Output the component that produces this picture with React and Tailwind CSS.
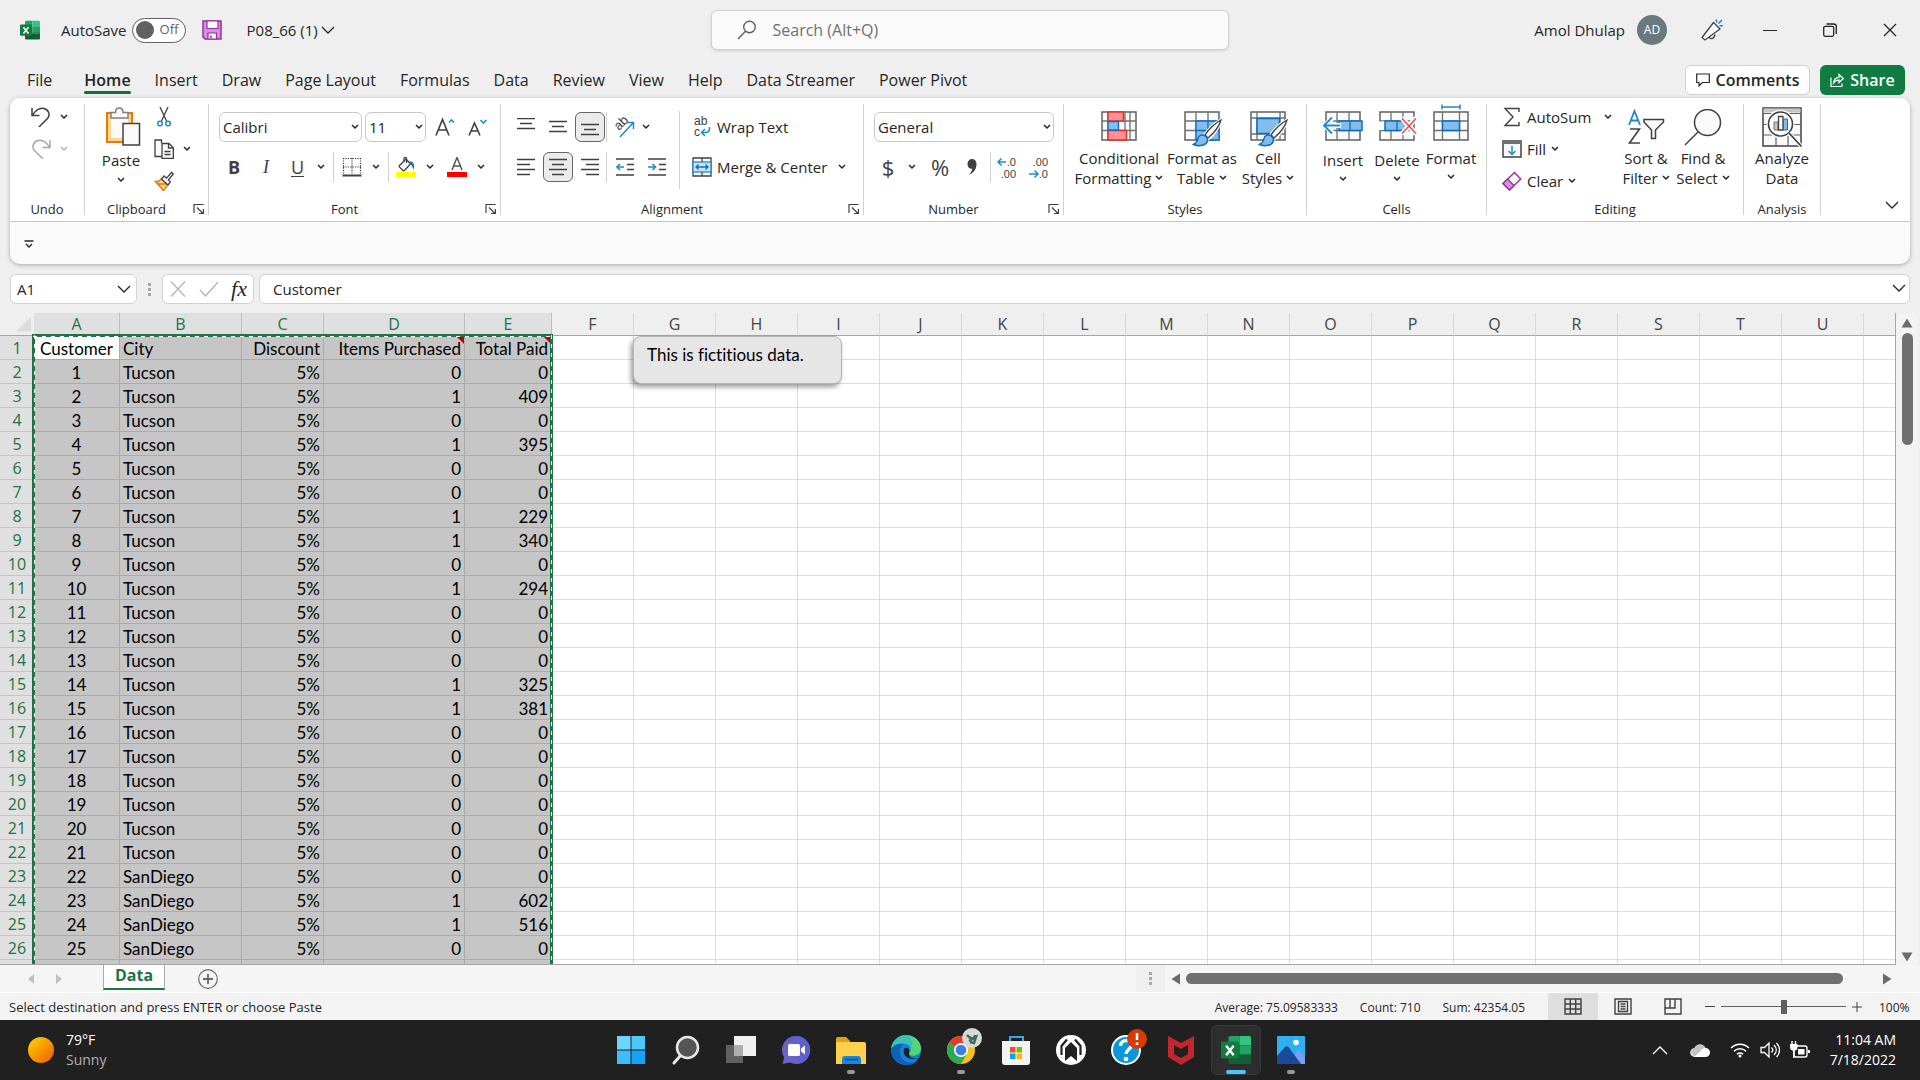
import React from "react";

/* ---------- small building blocks ---------- */

const Chev = ({ className = "text-[#262626]" }) => (
  <svg viewBox="0 0 8 6" className={`h-[6px] w-2 shrink-0 ${className}`} fill="none" stroke="currentColor" strokeWidth="1.5">
    <path d="M1 1l3 3 3-3" />
  </svg>
);

const BigChev = ({ className = "" }) => (
  <svg viewBox="0 0 14 8" className={`h-2 w-[14px] shrink-0 ${className}`} fill="none" stroke="#262626" strokeWidth="1.3">
    <path d="M1 1l6 6 6-6" />
  </svg>
);

const Launcher = () => (
  <button aria-label="More options" className="absolute right-[3px] bottom-0 h-3 w-3">
    <svg viewBox="0 0 12 12" className="h-3 w-3" fill="none" stroke="#404040" strokeWidth="1.2">
      <path d="M1 10V1.5h9.5M4 4.500l6 6M10.400 6v4.500H6" />
    </svg>
  </button>
);

const Group = ({ label, width, launcher, children }) => (
  <section aria-label={label} className={`relative flex h-[111px] shrink-0 flex-col border-r border-[#d1d1d1] ${width}`}>
    <div className="min-h-0 flex-1">{children}</div>
    <div className={`h-3 text-center text-[13px] leading-3 text-[#262626] ${launcher ? "pr-5" : ""}`}>{label}</div>
    {launcher && <Launcher />}
  </section>
);

const IconBtn = ({ label, active, className = "w-8", children }) => (
  <button
    aria-label={label}
    className={`flex h-[30px] shrink-0 items-center justify-center rounded-md ${active ? "border border-[#666] bg-[#ebebeb]" : ""} ${className}`}
  >
    {children}
  </button>
);

const Sep = ({ className = "h-[30px]" }) => <div className={`w-px shrink-0 bg-[#d1d1d1] ${className}`} />;

const TallBtn = ({ icon, lines, width, chevBelow, noChev, iconHeight = "h-[43px]" }) => (
  <button className={`flex shrink-0 flex-col items-center text-[15px] leading-5 whitespace-nowrap text-[#262626] ${width}`}>
    <span className={`flex w-10 items-start justify-center ${iconHeight}`}>{icon}</span>
    <span>{lines[0]}</span>
    {chevBelow ? (
      <span className="flex h-[18px] items-center">
        <Chev />
      </span>
    ) : (
      <span className="flex items-center gap-1">
        {lines[1]}
        {!noChev && <Chev />}
      </span>
    )}
  </button>
);

/* ---------- icons ---------- */

const ExcelIcon = ({ className }) => (
  <svg viewBox="0 0 32 32" className={className}>
    <path d="M10 1h10v10H8V3a2 2 0 0 1 2-2z" fill="#21a366" />
    <path d="M20 1h10a2 2 0 0 1 2 2v8H20z" fill="#33c481" />
    <path d="M8 11h12v10H8z" fill="#107c41" />
    <path d="M20 11h12v10H20z" fill="#21a366" />
    <path d="M8 21h24v8a2 2 0 0 1-2 2H10a2 2 0 0 1-2-2z" fill="#185c37" />
    <path d="M20 21h12v-1H20z" fill="#107c41" />
    <rect x="0" y="7" width="19" height="18" rx="1.500" fill="#107c41" />
    <path d="M5.500 11.500l8 10M13.500 11.500l-8 10" stroke="#fff" strokeWidth="2.600" />
  </svg>
);

const SaveIcon = () => (
  <svg viewBox="0 0 20 20" className="h-5 w-5">
    <path d="M1 1h18v18H3l-2-2z" fill="#d590dc" stroke="#9a2fa3" strokeWidth="1.500" />
    <path d="M5 1h11v7.500H5z" fill="#fafafa" stroke="#9a2fa3" strokeWidth="1.200" />
    <path d="M6 19v-6h8.500v6z" fill="#fafafa" stroke="#9a2fa3" strokeWidth="1.200" />
    <path d="M9 15.500v3" stroke="#9a2fa3" strokeWidth="1.500" />
  </svg>
);

const UndoIcon = ({ flip, color = "#404040" }) => (
  <svg viewBox="0 0 20 20" className={`h-5 w-5 ${flip ? "-scale-x-100" : ""}`} fill="none" stroke={color} strokeWidth="1.500">
    <path d="M1 1v7.500h7.500M1.500 8C5 3 9 .5 13 1.500c5 1.500 6.500 6.500 3.500 10L8 20" />
  </svg>
);

const PasteIcon = () => (
  <svg viewBox="0 0 36 40" className="h-10 w-9">
    <rect x="2" y="6" width="25" height="29" fill="#fff" stroke="#e8790c" strokeWidth="2" />
    <rect x="4.500" y="8.500" width="20" height="24" fill="#fafafa" stroke="#fbd68c" strokeWidth="3" />
    <path d="M6 11V5.500h4.500C10.500-.5 18 -.5 18 5.500h5V11z" fill="#fafafa" stroke="#808080" strokeWidth="1.500" />
    <rect x="18" y="16.500" width="16.500" height="21.500" fill="#fafafa" stroke="#404040" strokeWidth="1.500" />
  </svg>
);

const CutIcon = () => (
  <svg viewBox="0 0 16 20" className="h-5 w-4" fill="none" strokeWidth="1.300">
    <path d="M4 0l6.500 14M12 0L5.500 14" stroke="#404040" />
    <circle cx="4" cy="16.500" r="2.300" stroke="#1e8bcd" strokeWidth="1.500" />
    <circle cx="12" cy="16.500" r="2.300" stroke="#1e8bcd" strokeWidth="1.500" />
  </svg>
);

const CopyIcon = () => (
  <svg viewBox="0 0 20 20" className="h-5 w-5" fill="#fafafa" stroke="#404040" strokeWidth="1.300">
    <path d="M8 17.500H1V1h6.500v3" />
    <path d="M8 4.500h7l4.300 4.300V19.300H8z" />
    <path d="M14.500 4.500v4.500h4.500M10.500 12.500h6M10.500 15.500h6" fill="none" />
  </svg>
);

const PainterIcon = () => (
  <svg viewBox="0 0 20 20" className="h-5 w-5">
    <path d="M1.500 10.500c2.500.2 4.500-.6 6-2.500l6 5.500c-1 2.500-2 4.500-4 6L1.500 10.500z" fill="#fbd68c" stroke="#e8790c" strokeWidth="1.500" />
    <path d="M4 13l8 0" stroke="#e8790c" strokeWidth="1.300" />
    <path d="M7.500 8l2.500-3 2.500 2.200L17.500 1.500l1.800 1.500-5 6 2 2-2.300 3z" fill="#fff" stroke="#404040" strokeWidth="1.300" />
  </svg>
);

const FontGrow = ({ down }) => (
  <svg viewBox="0 0 20 20" className="h-5 w-5" fill="none">
    <path d={down ? "M1 18.500L6.500 6l5.500 12.500M3.200 14h6.600" : "M1 18.500L7.500 2.500l6.500 16M3.500 13h8"} stroke="#404040" strokeWidth="1.600" />
    <path d={down ? "M12.500 3l3 3 3-3" : "M14 5.500l2.500-2.500L19 5.500"} stroke="#1e8bcd" strokeWidth="1.600" />
  </svg>
);

const BordersIcon = () => (
  <svg viewBox="0 0 20 20" className="h-5 w-5" fill="none" stroke="#404040">
    <path d="M1 1.500h18M1 10h18M1.500 1v16M10 1v16M18.500 1v16" strokeDasharray="1.200 1.200" strokeWidth="1.200" />
    <path d="M.5 18.500h19" strokeWidth="1.800" />
  </svg>
);

const FillIcon = () => (
  <svg viewBox="0 0 20 20" className="h-5 w-5">
    <path d="M10 2L3.500 8.500c-.6.6-.6 1 0 1.600l3.300 3.200c.6.6 1.200.6 1.800 0L14.500 7z" fill="#fafafa" stroke="#404040" strokeWidth="1.300" />
    <path d="M8 5V1.500c0-1.500 2.500-1.500 2.500 0V6" fill="none" stroke="#404040" strokeWidth="1.200" />
    <path d="M13 5c3-1.500 6 1 5 7.500-1.200-1-1.500-3-3-5z" fill="#1e6fb8" />
    <rect y="15" width="20" height="5" fill="#ff0" />
  </svg>
);

const FontColorIcon = () => (
  <svg viewBox="0 0 20 20" className="h-5 w-5">
    <path d="M5 13l5-12.500L15 13M6.800 9h6.400" fill="none" stroke="#555" strokeWidth="1.500" />
    <rect y="15" width="20" height="5" fill="#f00" />
  </svg>
);

const Lines = ({ d }) => (
  <svg viewBox="0 0 18 18" className="h-[18px] w-[18px]" fill="none" stroke="#404040" strokeWidth="1.300">
    <path d={d} />
  </svg>
);

const OrientIcon = () => (
  <svg viewBox="0 0 22 22" className="h-[22px] w-[22px] overflow-visible font-['Liberation_Sans']">
    <text x="0" y="0" transform="translate(6 15) rotate(-45)" fontSize="13" fill="#404040">ab</text>
    <path d="M7 21L20 7M14 6.500h6.500V13" fill="none" stroke="#1e8bcd" strokeWidth="1.500" />
  </svg>
);

const IndentIcon = ({ inc }) => (
  <svg viewBox="0 0 18 18" className="h-[18px] w-[18px]" fill="none" strokeWidth="1.300">
    <path d="M0 1h18M11 6.500h7M11 11.500h7M0 17h18" stroke="#404040" />
    <path d={inc ? "M0 9h7M4.500 6l3 3-3 3" : "M8 9H1M4 6L1 9l3 3"} stroke="#1e8bcd" strokeWidth="1.600" />
  </svg>
);

const WrapIcon = () => (
  <svg viewBox="0 0 18 26" className="h-[26px] w-[18px] overflow-visible font-['Liberation_Sans']">
    <text x="1" y="11" fontSize="12" fill="#404040">ab</text>
    <text x="1" y="22" fontSize="12" fill="#404040">c</text>
    <path d="M16.500 13v1.500c0 2.500-1.500 4-4 4H8.500M12 15l-3.500 3.500L12 22" fill="none" stroke="#1e8bcd" strokeWidth="1.500" />
  </svg>
);

const MergeIcon = () => (
  <svg viewBox="0 0 20 20" className="h-5 w-5" fill="none" strokeWidth="1.300">
    <path d="M1 1h18v18H1zM10 1v4M10 15v4" stroke="#404040" />
    <rect x="1" y="5" width="18" height="10" fill="#c9e4f7" stroke="#1e8bcd" />
    <path d="M4 10h12M6.500 7.500L4 10l2.500 2.500M13.500 7.500L16 10l-2.500 2.500" stroke="#0f6cbd" />
  </svg>
);

const DecimalIcon = ({ dec }) => (
  <svg viewBox="0 0 20 25" className="h-[25px] w-5 overflow-visible font-['Liberation_Sans']">
    <text x="19" y="11" fontSize="11" fill="#404040" textAnchor="end">{dec ? ".00" : ".0"}</text>
    <text x="19" y="23" fontSize="11" fill="#404040" textAnchor="end">{dec ? ".0" : ".00"}</text>
    <path d={dec ? "M0 19h9M5.500 15.500L9 19l-3.500 3.500" : "M9 7H1M4.500 3.500L1 7l3.500 3.500"} fill="none" stroke="#1e8bcd" strokeWidth="1.500" />
  </svg>
);

const GridBase = ({ children }) => (
  <svg viewBox="0 0 36 30" className="mt-[6px] h-[30px] w-9 overflow-visible" fill="none" strokeWidth="1.300">
    <path d="M1 1h34v28H1z" fill="#fafafa" stroke="#606060" strokeWidth="1.500" />
    <path d="M1 10h34M1 19.500h34M12 1v28M24 1v28" stroke="#707070" />
    {children}
  </svg>
);

const BrushOverlay = () => (
  <>
    <path d="M37 9c-6 3-13 10-17 16l4 3c6-5 11-12 13-19z" fill="#fafafa" stroke="#fff" strokeWidth="3" />
    <path d="M37 9c-6 3-13 10-16 15l3 3c6-5 11-11 13-18z" fill="#fafafa" stroke="#404040" />
    <path d="M20.500 24.500c-3-1.500-6 0-6.500 3-.5 3-2 4.500-4.500 6 6 2.500 13 1 14-4 .3-2-1-4-3-5z" fill="#83bdeb" stroke="#0f6cbd" strokeWidth="1.500" />
  </>
);

const CondIcon = () => (
  <svg viewBox="0 0 36 30" className="mt-[6px] h-[30px] w-9 overflow-visible" fill="none" strokeWidth="1.300">
    <path d="M1 1h34v28H1z" fill="#fafafa" stroke="#606060" strokeWidth="1.500" />
    <path d="M1 10h34M1 19.500h34M7 1v28M29 1v28M24 1v28" stroke="#707070" />
    <path d="M7 1h15.500v9H7zM7 19.500h18.500v9.500H7z" fill="#ff9092" stroke="#e0302c" strokeWidth="1.500" />
    <path d="M7 10.500h10.500v8.500H7z" fill="#83bdeb" stroke="#0f6cbd" />
  </svg>
);

const FormatTableIcon = () => (
  <GridBase>
    <path d="M12 10h23v19H12z" fill="#83bdeb" stroke="#0f6cbd" />
    <path d="M12 19.500h23M24 10v19" stroke="#0f6cbd" />
    <BrushOverlay />
  </GridBase>
);

const CellStylesIcon = () => (
  <svg viewBox="0 0 36 30" className="mt-[6px] h-[30px] w-9 overflow-visible" fill="none" strokeWidth="1.300">
    <path d="M1 1h34v28H1z" fill="#fafafa" stroke="#606060" strokeWidth="1.500" />
    <path d="M1 7h34M1 23h34M7 1v28M30 1v28" stroke="#707070" />
    <path d="M7 7.500h22.500V22.500H7z" fill="#83bdeb" stroke="#0f6cbd" strokeWidth="1.500" />
    <BrushOverlay />
  </svg>
);

const InsertIcon = () => (
  <GridBase>
    <path d="M14 10h23v9.500H14z" fill="#83bdeb" stroke="#0f6cbd" strokeWidth="1.500" />
    <path d="M25 10v9.500" stroke="#0f6cbd" />
    <path d="M9 5.500L0 14.500l9 9M0 14.500h16" stroke="#fff" strokeWidth="5" />
    <path d="M7 6.500l-8 8 8 8M-1 14.500h16" stroke="#1e8bcd" strokeWidth="1.800" />
  </GridBase>
);

const DeleteIcon = () => (
  <GridBase>
    <path d="M0 10.500h6v8.500H0z" fill="#fff" />
    <path d="M6 10h18l5 4.800-5 4.700H6z" fill="#83bdeb" stroke="#0f6cbd" strokeWidth="1.500" />
    <path d="M18 10v9.500" stroke="#0f6cbd" />
    <path d="M23 7l14 16M37 7L23 23" stroke="#fff" strokeWidth="5" />
    <path d="M23 7.500l14 15M37 7.500l-14 15" stroke="#f04a4a" strokeWidth="1.600" />
  </GridBase>
);

const FormatIcon = () => (
  <svg viewBox="0 0 36 30" className="mt-[6px] h-[30px] w-9 overflow-visible" fill="none" strokeWidth="1.300">
    <path d="M1 1h34v28H1z" fill="#fafafa" stroke="#606060" strokeWidth="1.500" />
    <path d="M1 10h34M1 19.500h34M9.500 1v28M26.500 1v28" stroke="#707070" />
    <path d="M9.500 10h17v9.500h-17z" fill="#83bdeb" stroke="#0f6cbd" strokeWidth="1.500" />
    <path d="M9-4h18M9-6.500v5M27-6.500v5" stroke="#1e8bcd" strokeWidth="1.500" />
  </svg>
);

const SigmaIcon = () => (
  <svg viewBox="0 0 18 20" className="h-5 w-[18px]" fill="none" stroke="#404040" strokeWidth="1.400">
    <path d="M16 5V1.500H2L10 10l-8 8.500h14V15" />
  </svg>
);

const FillDownIcon = () => (
  <svg viewBox="0 0 20 18" className="h-[18px] w-5" fill="none" strokeWidth="1.500">
    <path d="M1 1h18v16H1z" fill="#fafafa" stroke="#404040" />
    <path d="M1 2.500h18" stroke="#707070" strokeWidth="3" />
    <path d="M10 6v8M6.500 11l3.500 3.500 3.500-3.500" stroke="#1e8bcd" />
  </svg>
);

const EraserIcon = () => (
  <svg viewBox="0 0 20 20" className="h-5 w-5" stroke="#9a2fa3" strokeWidth="1.400">
    <path d="M12.500 1.500L18.800 8 7.500 19 1 12.500z" fill="#fafafa" />
    <path d="M5.500 8L12 14.500 7.500 19 1 12.500z" fill="#d590dc" />
  </svg>
);

const SortIcon = () => (
  <svg viewBox="0 0 38 36" className="mt-1 h-9 w-[38px]" fill="none">
    <path d="M2 16L7.500 2 13 16M4 11.500h7" stroke="#1e8bcd" strokeWidth="1.800" />
    <path d="M3 20h9.500L2.500 34H13" stroke="#404040" strokeWidth="1.600" />
    <path d="M17 10.500h19.500v2.500L28.500 21v8.500h-4V21L17 13z" fill="#fafafa" stroke="#404040" strokeWidth="1.500" />
  </svg>
);

const FindIcon = () => (
  <svg viewBox="0 0 38 38" className="mt-1 h-[38px] w-[38px]" fill="none" stroke="#404040" strokeWidth="1.500">
    <circle cx="23.500" cy="13.500" r="13" fill="#fafafa" />
    <path d="M14 23L1 36" />
  </svg>
);

const AnalyzeIcon = () => (
  <svg viewBox="0 0 40 40" className="mt-[2px] h-10 w-10" fill="none">
    <path d="M1 1h38v38H1z" fill="#fafafa" stroke="#404040" strokeWidth="1.500" />
    <path d="M1.500 3.500h37" stroke="#c8c6c4" strokeWidth="4" />
    <path d="M1 6.500h38M1 17.500h38M1 28h38M14 28v11M26 28v11" stroke="#606060" strokeWidth="1.200" />
    <circle cx="18.500" cy="17" r="14" fill="#fff" />
    <circle cx="18.500" cy="17" r="12" fill="#fff" stroke="#404040" strokeWidth="1.600" />
    <path d="M12 15h4v8h-4z" fill="#c8c6c4" stroke="#707070" />
    <path d="M16.500 9.500h4.500V23h-4.500z" fill="#fafafa" stroke="#404040" strokeWidth="1.300" />
    <path d="M21.500 12h4v11h-4z" fill="#83bdeb" stroke="#0f6cbd" />
    <path d="M27 26l12 13" stroke="#fff" strokeWidth="4" />
    <path d="M27 26l12 13" stroke="#404040" strokeWidth="1.800" />
  </svg>
);

/* ---------- title bar and tabs ---------- */

const TitleBar = () => (
  <header className="flex h-[60px] shrink-0 items-center text-[15px] text-[#262626]">
    <div className="flex flex-1 items-center pl-5">
      <ExcelIcon className="h-5 w-5" />
      <label htmlFor="autosave" className="ml-[21px]">AutoSave</label>
      <button id="autosave" role="switch" aria-checked="false" className="ml-[5px] flex h-[25px] w-[54px] items-center gap-[6px] rounded-full border border-[#616161] bg-white pl-[3px] text-[13px] text-[#616161]">
        <span className="h-[18px] w-[18px] rounded-full bg-[#616161]" />
        Off
      </button>
      <button aria-label="Save" className="ml-4"><SaveIcon /></button>
      <button className="ml-[25px] flex items-center gap-[3px]">P08_66 (1) <BigChev /></button>
    </div>
    <div className="ml-[22px] flex h-10 w-[518px] shrink-0 items-center rounded-md border border-[#d1d1d1] bg-[#fafafa] pl-[25px] shadow-sm">
      <svg viewBox="0 0 20 20" className="h-5 w-5" fill="none" stroke="#616161" strokeWidth="1.400">
        <circle cx="12.500" cy="7" r="5.800" />
        <path d="M8.500 11.200L1 19" />
      </svg>
      <input aria-label="Search" placeholder="Search (Alt+Q)" className="ml-4 min-w-0 flex-1 bg-transparent text-base outline-none placeholder:text-[#707070]" />
    </div>
    <div className="flex flex-1 items-center justify-end pr-[23px]">
      <span>Amol Dhulap</span>
      <span className="ml-3 flex h-[30px] w-[30px] items-center justify-center rounded-full bg-[#69797e] text-xs text-white">AD</span>
      <button aria-label="What's new" className="ml-[34px]">
        <svg viewBox="0 0 22 22" className="h-[22px] w-[22px]" fill="none" strokeWidth="1.300">
          <path d="M12.500 3.500l6.500 6.500L4 21l-3-2.500z" fill="#fafafa" stroke="#404040" />
          <path d="M8 18c1 2.500 5 2.500 6-2.500" stroke="#404040" />
          <path d="M15 .5l1 3M21 1l-3.500 3.500M18.500 6.500l3.500.5" stroke="#1e8bcd" strokeWidth="1.600" />
        </svg>
      </button>
      <button aria-label="Minimize" className="ml-10 flex h-4 w-[14px] items-center">
        <span className="block h-px w-full bg-[#262626]" />
      </button>
      <button aria-label="Restore" className="ml-[46px]">
        <svg viewBox="0 0 14 14" className="h-[14px] w-[14px]" fill="none" stroke="#262626" strokeWidth="1.300">
          <rect x=".7" y="3.300" width="10" height="10" rx="1.500" />
          <path d="M3.500 1h7c2 0 2.800 1 2.800 2.500V11" />
        </svg>
      </button>
      <button aria-label="Close" className="ml-[46px]">
        <svg viewBox="0 0 14 14" className="h-[14px] w-[14px]" fill="none" stroke="#262626" strokeWidth="1.300">
          <path d="M1 1l12 12M13 1L1 13" />
        </svg>
      </button>
    </div>
  </header>
);

const tabs = ["Insert", "Draw", "Page Layout", "Formulas", "Data", "Review", "View", "Help", "Data Streamer", "Power Pivot"];

const Tabs = () => (
  <nav className="flex h-[38px] shrink-0 items-center pt-px pr-[15px] pl-[27px] text-base text-[#262626]">
    <div className="flex items-center gap-6 pt-px">
      <button className="mr-2">File</button>
      <button className="relative font-semibold">
        Home
        <span className="absolute -bottom-[2px] left-0 h-[3px] w-full rounded-full bg-[#0e703a]" />
      </button>
      {tabs.map((t) => (
        <button key={t}>{t}</button>
      ))}
    </div>
    <div className="ml-auto flex gap-[10px] font-semibold">
      <button className="flex h-[30px] w-[125px] items-center justify-center gap-[6px] rounded-md border border-[#d1d1d1] bg-white">
        <svg viewBox="0 0 14 14" className="h-[14px] w-[14px]" fill="none" stroke="#262626" strokeWidth="1.200">
          <path d="M.7 1h12.600v8.500H6.500L3 12.800V9.500H.7z" />
        </svg>
        Comments
      </button>
      <button className="flex h-[30px] w-[85px] items-center justify-center gap-[6px] rounded-md bg-[#107c41] text-white">
        <svg viewBox="0 0 14 14" className="h-[14px] w-[14px]" fill="none" stroke="#fff" strokeWidth="1.200">
          <path d="M1 4.500v9h11v-3M3.500 10c.5-4 2.500-5.500 5.500-5.700V1.500l4.300 4L9 9.500V6.800C6.500 7 5 8 3.500 10z" />
        </svg>
        Share
      </button>
    </div>
  </nav>
);

/* ---------- ribbon ---------- */

const ribbonSelect = "h-[30px] appearance-none rounded-md border border-[#c8c8c8] bg-white pl-[3px] text-[15px] leading-5 text-[#262626]";

const Combo = ({ label, value, width }) => (
  <div className={`relative ${width}`}>
    <select aria-label={label} className={`w-full ${ribbonSelect}`}>
      <option>{value}</option>
    </select>
    <Chev className="pointer-events-none absolute top-3 right-[3px] text-[#262626]" />
  </div>
);

const Ribbon = () => (
  <div className="mx-[10px] shrink-0 overflow-hidden rounded-[10px] bg-[#fafafa] shadow-[0_1px_4px_rgba(0,0,0,0.3)]">
    <div className="flex h-[124px] border-b border-[#c6c6c6] bg-white pt-[6px]">
      <Group label="Undo" width="w-[75px]">
        <div className="flex flex-col gap-3 pt-[3px] pl-[21px]">
          <div className="flex items-center gap-[9px]">
            <button aria-label="Undo"><UndoIcon /></button>
            <button aria-label="Undo history"><Chev /></button>
          </div>
          <div className="flex items-center gap-[9px]">
            <button aria-label="Redo"><UndoIcon flip color="#a8a8a8" /></button>
            <button aria-label="Redo history"><Chev className="text-[#b0b0b0]" /></button>
          </div>
        </div>
      </Group>

      <Group label="Clipboard" width="w-[124px]" launcher>
        <div className="flex pl-[15px]">
          <button className="flex w-[42px] flex-col items-center pt-[3px] text-[15px] leading-5 text-[#262626]">
            <span className="flex w-10 justify-end"><PasteIcon /></span>
            <span className="mt-[3px]">Paste</span>
            <span className="flex h-5 items-center"><Chev /></span>
          </button>
          <div className="flex flex-col gap-3 pt-[3px] pl-3">
            <button aria-label="Cut" className="flex w-5 justify-center"><CutIcon /></button>
            <div className="flex items-center gap-[9px]">
              <button aria-label="Copy"><CopyIcon /></button>
              <button aria-label="Copy options"><Chev /></button>
            </div>
            <button aria-label="Format Painter" className="w-5"><PainterIcon /></button>
          </div>
        </div>
      </Group>

      <Group label="Font" width="w-[292px]" launcher>
        <div className="flex items-center gap-[3px] pt-2 pl-[10px]">
          <Combo label="Font" value="Calibri" width="w-[143px]" />
          <Combo label="Font size" value="11" width="w-[61px]" />
          <IconBtn label="Increase Font Size" className="ml-[2px] w-7"><FontGrow /></IconBtn>
          <IconBtn label="Decrease Font Size" className="w-8"><FontGrow down /></IconBtn>
        </div>
        <div className="mt-[10px] flex items-center pl-[9px] text-lg text-[#404040]">
          <IconBtn label="Bold"><b>B</b></IconBtn>
          <IconBtn label="Italic"><i className="font-['Liberation_Serif']">I</i></IconBtn>
          <IconBtn label="Underline" className="w-[31px]"><u className="underline-offset-2">U</u></IconBtn>
          <IconBtn label="Underline options" className="w-4"><Chev /></IconBtn>
          <Sep className="ml-1 h-[30px]" />
          <IconBtn label="Borders" className="ml-[2px] w-8"><BordersIcon /></IconBtn>
          <IconBtn label="Border options" className="w-4"><Chev /></IconBtn>
          <Sep className="ml-1 h-[30px]" />
          <IconBtn label="Fill Color" className="ml-px w-8"><FillIcon /></IconBtn>
          <IconBtn label="Fill options" className="w-4"><Chev /></IconBtn>
          <IconBtn label="Font Color" className="ml-[3px] w-8"><FontColorIcon /></IconBtn>
          <IconBtn label="Font color options" className="w-4"><Chev /></IconBtn>
        </div>
      </Group>

      <Group label="Alignment" width="w-[363px]" launcher>
        <div className="flex pl-[9px]">
          <div className="pt-2">
            <div className="flex items-center">
              <IconBtn label="Top Align"><Lines d="M0 0.500h18M3 5.500h12M0 10.500h18" /></IconBtn>
              <IconBtn label="Middle Align"><Lines d="M0 3.500h18M3 8.500h12M0 13.500h18" /></IconBtn>
              <IconBtn label="Bottom Align" active className="mx-px w-[30px]"><Lines d="M0 6.500h18M3 11.500h12M0 16.500h18" /></IconBtn>
              <Sep />
              <IconBtn label="Orientation" className="ml-px w-8"><OrientIcon /></IconBtn>
              <IconBtn label="Orientation options" className="w-3"><Chev /></IconBtn>
            </div>
            <div className="mt-[10px] flex items-center">
              <IconBtn label="Align Left"><Lines d="M0 1.500h18M0 6.500h13M0 11.500h18M0 16.500h13" /></IconBtn>
              <IconBtn label="Center" active className="mx-px w-[30px]"><Lines d="M0 1.500h18M3 6.500h12M0 11.500h18M3 16.500h12" /></IconBtn>
              <IconBtn label="Align Right"><Lines d="M0 1.500h18M5 6.500h13M0 11.500h18M5 16.500h13" /></IconBtn>
              <Sep />
              <IconBtn label="Decrease Indent" className="ml-[2px] w-8"><IndentIcon /></IconBtn>
              <IconBtn label="Increase Indent"><IndentIcon inc /></IconBtn>
            </div>
          </div>
          <Sep className="mt-[7px] ml-[6px] h-[78px]" />
          <div className="pt-2 pl-3 text-[15px] whitespace-nowrap text-[#262626]">
            <button className="flex h-[30px] items-center gap-[5px]"><span className="flex w-5 justify-center"><WrapIcon /></span>Wrap Text</button>
            <div className="mt-[10px] flex items-center gap-[11px]">
              <button className="flex h-[30px] items-center gap-[5px]"><MergeIcon />Merge &amp; Center</button>
              <button aria-label="Merge options"><Chev /></button>
            </div>
          </div>
        </div>
      </Group>

      <Group label="Number" width="w-[200px]" launcher>
        <div className="pt-2 pl-[10px]">
          <Combo label="Number format" value="General" width="w-[180px]" />
          <div className="mt-[10px] flex items-center text-[22px] text-[#404040]">
            <IconBtn label="Accounting Format" className="w-7">$</IconBtn>
            <IconBtn label="Accounting options" className="w-5"><Chev /></IconBtn>
            <IconBtn label="Percent Style" className="w-9">%</IconBtn>
            <IconBtn label="Comma Style" className="w-7">
              <svg viewBox="0 0 12 18" className="h-[18px] w-3">
                <path d="M6 1c3 0 4.500 2 4.500 5.500C10.500 11.500 7 15.500 2.500 17c2.500-2 3.500-4 3.700-6.300C3.500 11 1.500 9 1.500 6S3.500 1 6 1z" fill="#404040" />
              </svg>
            </IconBtn>
            <Sep className="ml-1 h-[30px]" />
            <IconBtn label="Increase Decimal"><DecimalIcon /></IconBtn>
            <IconBtn label="Decrease Decimal"><DecimalIcon dec /></IconBtn>
          </div>
        </div>
      </Group>

      <Group label="Styles" width="w-[243px]">
        <div className="flex pt-[1px] pl-2">
          <TallBtn width="w-[94px]" icon={<CondIcon />} lines={["Conditional", "Formatting"]} />
          <TallBtn width="w-[72px]" icon={<FormatTableIcon />} lines={["Format as", "Table"]} />
          <TallBtn width="w-[60px]" icon={<CellStylesIcon />} lines={["Cell", "Styles"]} />
        </div>
      </Group>

      <Group label="Cells" width="w-[180px]">
        <div className="flex pt-[1px] pl-[9px]">
          <TallBtn width="w-[54px]" icon={<InsertIcon />} lines={["Insert"]} chevBelow iconHeight="h-[45px]" />
          <TallBtn width="w-[54px]" icon={<DeleteIcon />} lines={["Delete"]} chevBelow iconHeight="h-[45px]" />
          <TallBtn width="w-[54px]" icon={<FormatIcon />} lines={["Format"]} chevBelow />
        </div>
      </Group>

      <Group label="Editing" width="w-[257px]">
        <div className="flex pt-px pl-[15px]">
          <div className="flex w-[116px] flex-col gap-2 text-[15px] whitespace-nowrap text-[#262626]">
            <div className="flex h-6 items-center justify-between pr-[6px]">
              <button className="flex items-center gap-[5px]"><span className="flex w-5 justify-center"><SigmaIcon /></span>AutoSum</button>
              <button aria-label="AutoSum options"><Chev /></button>
            </div>
            <button className="flex h-6 items-center gap-[5px]"><FillDownIcon />Fill <Chev /></button>
            <button className="flex h-6 items-center gap-[5px]"><EraserIcon />Clear <Chev /></button>
          </div>
          <TallBtn width="w-[56px]" icon={<SortIcon />} lines={["Sort &", "Filter"]} />
          <TallBtn width="w-[58px]" icon={<FindIcon />} lines={["Find &", "Select"]} />
        </div>
      </Group>

      <Group label="Analysis" width="w-[77px]">
        <div className="flex justify-center pt-[1px]">
          <TallBtn width="w-[60px]" icon={<AnalyzeIcon />} lines={["Analyze", "Data"]} noChev />
        </div>
      </Group>

      <button aria-label="Collapse ribbon" className="mt-auto mr-[11px] mb-3 ml-auto"><BigChev /></button>
    </div>
    <div className="flex h-[42px] items-center pt-[2px] pl-[14px]">
      <button aria-label="Customize toolbar">
        <svg viewBox="0 0 10 9" className="h-[9px] w-[10px]" fill="none" stroke="#262626" strokeWidth="1.400">
          <path d="M.5 1h9M2 4l3 3 3-3" />
        </svg>
      </button>
    </div>
  </div>
);

/* ---------- formula bar ---------- */

const Dots = ({ className = "" }) => (
  <span className={`flex flex-col gap-[2px] ${className}`}>
    <span className="h-[3px] w-[3px] bg-[#a8a8a8]" />
    <span className="h-[3px] w-[3px] bg-[#a8a8a8]" />
    <span className="h-[3px] w-[3px] bg-[#a8a8a8]" />
  </span>
);

const FormulaBar = () => (
  <div className="mt-[10px] flex h-[30px] shrink-0 items-center px-[10px] text-[15px] text-[#262626]">
    <div className="relative h-full w-[127px]">
      <input aria-label="Name box" defaultValue="A1" className="h-full w-full rounded-md border border-[#d1d1d1] bg-white pl-[6px] outline-none" />
      <button aria-label="Name list" className="absolute top-[11px] right-[6px]"><BigChev className="block" /></button>
    </div>
    <Dots className="mx-[11px]" />
    <div className="flex h-full w-[92px] items-center justify-between rounded-md border border-[#d1d1d1] bg-white px-[6px]">
      <button aria-label="Cancel">
        <svg viewBox="0 0 18 18" className="h-[18px] w-[18px]" fill="none" stroke="#b5b5b5" strokeWidth="1.300"><path d="M2 1.500l14 15M16 1.500L2 16.500" /></svg>
      </button>
      <button aria-label="Enter">
        <svg viewBox="0 0 20 16" className="h-4 w-5" fill="none" stroke="#b5b5b5" strokeWidth="1.300"><path d="M1 9l5.500 6L19 1" /></svg>
      </button>
      <button aria-label="Insert Function" className="font-['Liberation_Serif'] text-[22px] leading-5 font-medium text-[#262626] italic">fx</button>
    </div>
    <div className="relative ml-[5px] h-full flex-1">
      <input aria-label="Formula bar" defaultValue="Customer" className="h-full w-full rounded-md border border-[#d1d1d1] bg-white pl-[13px] outline-none" />
      <button aria-label="Expand formula bar" className="absolute top-[10px] right-1"><BigChev className="block" /></button>
    </div>
  </div>
);

/* ---------- sheet ---------- */

const paid = { 2: 409, 4: 395, 7: 229, 8: 340, 10: 294, 14: 325, 15: 381, 23: 602, 24: 516 };
const rows = [["Customer", "City", "Discount", "Items Purchased", "Total Paid"]];
for (let i = 1; i <= 25; i++) {
  rows.push([i, i < 22 ? "Tucson" : "SanDiego", "5%", paid[i] ? 1 : 0, paid[i] || 0]);
}
rows.push(["", "", "", "", ""]);
const letters = "ABCDEFGHIJKLMNOPQRSTU".split("");
const aligns = ["text-center", "text-left pl-[3px]", "text-right pr-[3px]", "text-right pr-[3px]", "text-right pr-[3px]"];

const Sheet = () => (
  <div className="flex min-h-0 flex-1 pt-[9px]">
    <div className="relative min-w-0 flex-1 overflow-hidden border-r border-b border-[#a6a6a6] bg-white">
      <table className="w-full table-fixed border-separate border-spacing-0 font-['Lato'] text-[17px] leading-[21px] text-black">
        <colgroup>
          <col className="w-[34px]" />
          <col className="w-[86px]" />
          <col className="w-[122px]" />
          <col className="w-[82px]" />
          <col className="w-[141px]" />
          <col className="w-[87px]" />
          {letters.slice(5).map((l) => (
            <col key={l} className="w-[82px]" />
          ))}
          <col />
        </colgroup>
        <thead>
          <tr className="h-[23px] bg-[#efefef] font-['Open_Sans'] text-base">
            <th aria-label="Select all" className="border-b border-[#a6a6a6] p-0">
              <span className="ml-4 block h-[15px] w-[15px] bg-[#dcdcdc] [clip-path:polygon(100%_0,100%_100%,0_100%)]" />
            </th>
            {letters.map((l, i) => (
              <th
                key={l}
                className={`border-r border-b border-b-[#a6a6a6] p-0 leading-[22px] font-normal ${i < 5 ? "border-r-[#bdbdbd] bg-[#e0e0e0] text-[#217346]" : "border-r-[#d8d8d8] text-[#444]"}`}
              >
                {l}
              </th>
            ))}
            <th className="border-b border-[#a6a6a6] p-0" />
          </tr>
        </thead>
        <tbody>
          {rows.map((r, ri) => (
            <tr key={ri} className="h-6">
              <th className="border-b border-[#c6c6c6] bg-[#e0e0e0] p-0 text-center font-['Open_Sans'] text-base leading-5 font-normal text-[#217346]">
                {ri < 26 ? ri + 1 : ""}
              </th>
              {r.map((v, ci) => (
                <td
                  key={ci}
                  className={`relative border-r border-b border-[#ababab] p-0 pt-px whitespace-nowrap ${aligns[ci]} ${ri === 0 && ci === 0 ? "bg-white" : "bg-[#c6c6c6]"}`}
                >
                  {v}
                  {ri === 0 && ci > 2 && (
                    <span className="absolute top-px right-0 h-[7px] w-[7px] bg-[#c00000] [clip-path:polygon(0_0,100%_0,100%_100%)]" />
                  )}
                </td>
              ))}
              {letters.slice(5).map((l) => (
                <td key={l} className="border-r border-b border-[#dedede] p-0" />
              ))}
              <td className="border-b border-[#dedede] p-0" />
            </tr>
          ))}
        </tbody>
      </table>

      <div className="pointer-events-none absolute top-[21px] -bottom-1 left-8 w-[521px] border-[3px] border-[#217346]">
        <div className="absolute -top-px -right-[2px] -left-[2px] h-px bg-[repeating-linear-gradient(90deg,#fff_0_4px,transparent_4px_9px)]" />
        <div className="absolute -top-[2px] bottom-0 -left-px w-px bg-[repeating-linear-gradient(180deg,#fff_0_4px,transparent_4px_9px)]" />
        <div className="absolute -top-[2px] -right-[2px] bottom-0 w-px bg-[repeating-linear-gradient(180deg,#fff_0_4px,transparent_4px_9px)]" />
      </div>

      <div className="absolute top-[23px] left-[633px] h-[48px] w-[209px] rounded-lg border border-[#b5b5b5] bg-[#e6e6e6] pt-2 pl-[13px] font-['Lato'] text-[17px] leading-5 text-black shadow-[-2px_3px_5px_rgba(0,0,0,0.4)] [font-variant-ligatures:none]">
        This is fictitious data.
      </div>
    </div>

    <div className="mr-[2px] flex w-[22px] shrink-0 flex-col items-center rounded-t-lg bg-[#f3f3f3] py-[3px]">
      <svg viewBox="0 0 12 10" className="mt-[2px] h-[10px] w-3"><path d="M6 .5L11.500 9.500H.5z" fill="#6b6b6b" /></svg>
      <div className="mt-[5px] h-28 w-[11px] rounded-full bg-[#707070]" />
      <svg viewBox="0 0 12 10" className="mt-auto h-[10px] w-3"><path d="M6 9.500L11.500.5H.5z" fill="#6b6b6b" /></svg>
    </div>
  </div>
);

const SheetTabs = () => (
  <div className="flex h-[28px] shrink-0 items-center border-b border-white bg-[#f5f5f5]">
    <div className="flex w-[103px] items-center gap-[22px] pl-7">
      <svg viewBox="0 0 6 10" className="h-[10px] w-[6px]"><path d="M6 0v10L0 5z" fill="#c0c0c0" /></svg>
      <svg viewBox="0 0 6 10" className="h-[10px] w-[6px]"><path d="M0 0v10l6-5z" fill="#c0c0c0" /></svg>
    </div>
    <button className="-mt-px h-[26px] w-[62px] self-start border-x border-b-2 border-x-[#ababab] border-b-[#217346] bg-white pb-[2px] text-base leading-5 font-bold text-[#217346]">Data</button>
    <button aria-label="New sheet" className="ml-[33px]">
      <svg viewBox="0 0 20 20" className="h-5 w-5" fill="none" stroke="#6b6b6b" strokeWidth="1.200">
        <circle cx="10" cy="10" r="9.300" />
        <path d="M10 5v10M5 10h10" strokeWidth="1.800" />
      </svg>
    </button>
    <div className="ml-auto flex h-full w-[29px] items-center justify-center bg-[#efefef]"><Dots /></div>
    <div className="flex h-full w-[727px] items-center pl-[6px]">
      <svg viewBox="0 0 9 12" className="h-3 w-[9px]"><path d="M9 .5v11L.5 6z" fill="#6b6b6b" /></svg>
      <div className="ml-[6px] h-[11px] w-[657px] rounded-full bg-[#707070]" />
      <svg viewBox="0 0 9 12" className="ml-auto h-3 w-[9px]"><path d="M0 .5v11L8.500 6z" fill="#6b6b6b" /></svg>
    </div>
    <div className="w-[28px]" />
  </div>
);

const StatusBar = () => (
  <footer className="flex h-[27px] shrink-0 items-center bg-[#f3f3f3] pl-[9px] text-xs text-[#262626]">
    <span className="flex-1 pt-[2px] text-[13px]">Select destination and press ENTER or choose Paste</span>
    <span className="flex gap-[22px] pt-[2px] pr-[23px]">
      <span>Average: 75.09583333</span>
      <span>Count: 710</span>
      <span>Sum: 42354.05</span>
    </span>
    <button aria-label="Normal view" className="flex h-full w-[50px] items-center justify-center bg-[#dedede]">
      <svg viewBox="0 0 18 17" className="h-[17px] w-[18px]" fill="none" stroke="#404040" strokeWidth="1.400"><path d="M1 1h16v15H1zM1 6h16M1 11h16M6.300 1v15M11.700 1v15" /></svg>
    </button>
    <button aria-label="Page layout view" className="flex h-full w-[50px] items-center justify-center">
      <svg viewBox="0 0 18 17" className="h-[17px] w-[18px]" fill="none" stroke="#404040" strokeWidth="1.400"><path d="M1 1h16v15H1zM4.500 3.500h9v10h-9zM6.500 6h5M6.500 8.500h5M6.500 11h5" /></svg>
    </button>
    <button aria-label="Page break view" className="flex h-full w-[50px] items-center justify-center">
      <svg viewBox="0 0 18 17" className="h-[17px] w-[18px]" fill="none" stroke="#404040" strokeWidth="1.400"><path d="M1 1h16v15H1zM1 10h10V1M6 1v9" /></svg>
    </button>
    <button aria-label="Zoom out" className="ml-[7px] h-px w-[10px] bg-[#404040]" />
    <input
      type="range"
      aria-label="Zoom"
      min="0"
      max="100"
      defaultValue="50"
      className="mx-[6px] h-4 w-[125px] appearance-none bg-[linear-gradient(#606060,#606060)] bg-[length:100%_1px] bg-center bg-no-repeat [&::-webkit-slider-thumb]:h-[14px] [&::-webkit-slider-thumb]:w-[6px] [&::-webkit-slider-thumb]:appearance-none [&::-webkit-slider-thumb]:bg-[#606060]"
    />
    <button aria-label="Zoom in">
      <svg viewBox="0 0 10 10" className="h-[10px] w-[10px]" stroke="#404040" strokeWidth="1"><path d="M5 0v10M0 5h10" /></svg>
    </button>
    <span className="ml-[17px] w-[41px] pt-[2px]">100%</span>
  </footer>
);

/* ---------- taskbar ---------- */

const apps = [
  {
    name: "Start",
    icon: (
      <g>
        <path d="M1 1h13.500v13.500H1z" fill="#6fd6fb" /><path d="M15.500 1H29v13.500H15.500z" fill="#4cc8fb" />
        <path d="M1 15.500h13.500V29H1z" fill="#3fbcfa" /><path d="M15.500 15.500H29V29H15.500z" fill="#16a2f7" />
      </g>
    ),
  },
  {
    name: "Search",
    icon: (
      <g>
        <path d="M9.500 20.500L3 28" stroke="#e8e8e8" strokeWidth="3" strokeLinecap="round" />
        <circle cx="16.500" cy="12.500" r="10.500" fill="#555" stroke="#e8e8e8" strokeWidth="2.500" />
      </g>
    ),
  },
  {
    name: "Task View",
    icon: (
      <g>
        <path d="M8 1h22v20H8z" fill="#f0f0f0" /><path d="M0 10h17v18H0z" fill="#606060" /><path d="M8 10h9v11H8z" fill="#aeaeae" />
      </g>
    ),
  },
  {
    name: "Chat",
    icon: (
      <g>
        <path d="M15 1a14 14 0 1 1-6 26.500L1.500 29l1.700-6.500A14 14 0 0 1 15 1z" fill="#6a63c8" />
        <path d="M29 15a14 14 0 0 0-14-14c-5 0-9 3-11 6 8-3 17 5 13 21.800C24 28 29 22 29 15z" fill="#5561d6" opacity=".6" />
        <rect x="7" y="9" width="12" height="12" rx="1.500" fill="#fff" /><path d="M20 13.500l4-3v9l-4-3z" fill="#fff" />
      </g>
    ),
  },
  {
    name: "File Explorer",
    open: true,
    icon: (
      <g>
        <path d="M0 4a2 2 0 0 1 2-2h8l4 4v6H0z" fill="#e8a010" /><path d="M0 7h28a2 2 0 0 1 2 2v20H0z" fill="#ffd04c" />
        <path d="M6 29v-5a3 3 0 0 1 3-3h13a3 3 0 0 1 3 3v5z" fill="#1a86d8" /><path d="M9 24.500h13" stroke="#0b559c" strokeWidth="1.500" />
      </g>
    ),
  },
  {
    name: "Edge",
    icon: (
      <g>
        <circle cx="15" cy="15" r="15" fill="#1681d8" />
        <path d="M0 14C1 5 8 0 15 0c9 0 15 6.500 15 13.500 0 5-4 7-8 7-3 0-4.500-1.500-3.500-3 3-5-1-9-6-9-6 0-10.500 3-12.500 5.500z" fill="#37c4b4" />
        <path d="M18 1c7 1 12 6 12 12.500 0 5-4 7-8 7-3 0-4.500-1.500-3.500-3C24 10 21 5 18 1z" fill="#5fdc62" opacity=".75" />
        <path d="M12.500 9c-4 4-5 10-1 15s10 4.500 15.500 1c-2 3-6 5-11 5C8 30 0 25 0 14c3-4.500 8-6 12.500-5z" fill="#0d62b8" />
        <path d="M13 14c-2 6 4 12.500 14.500 9-6 1.500-9.500-1-9.500-4 0-2 1-2.500 0-4.500-1-2-4-2.500-5-.5z" fill="#212121" />
      </g>
    ),
  },
  {
    name: "Chrome",
    open: true,
    icon: (
      <g>
        <circle cx="15" cy="15" r="14" fill="#fbc116" />
        <path d="M15 15L2.900 8A14 14 0 0 1 27.100 8z" fill="#e33b2e" /><path d="M2.900 8A14 14 0 0 0 15 29l6-10.500L15 15z" fill="#2da94f" />
        <circle cx="15" cy="15" r="7" fill="#fff" /><circle cx="15" cy="15" r="5.300" fill="#3b7ded" />
        <circle cx="26" cy="3" r="10" fill="#d8d8d8" /><path d="M21 0c3 4 8 5 8 0M23 6l7-4-2 6-4-1" stroke="#3d6b57" strokeWidth="2.500" fill="none" />
      </g>
    ),
  },
  {
    name: "Microsoft Store",
    icon: (
      <g>
        <path d="M9 7V2h13v5" fill="none" stroke="#35a8e8" strokeWidth="2" /><path d="M1 6h28v21a3 3 0 0 1-3 3H4a3 3 0 0 1-3-3z" fill="#f2f2f2" />
        <path d="M9 12h5.500v5.500H9z" fill="#f25022" /><path d="M15.500 12H21v5.500h-5.500z" fill="#7fba00" /><path d="M9 18.500h5.500V24H9z" fill="#00a4ef" /><path d="M15.500 18.500H21V24h-5.500z" fill="#ffb900" />
      </g>
    ),
  },
  {
    name: "Assistant",
    icon: (
      <g fill="none" stroke="#212121">
        <circle cx="15" cy="15" r="15" fill="#fff" stroke="none" />
        <path d="M9 26V13l6-6 6 6v13l-6-5z" fill="#212121" stroke="none" /><path d="M5.500 20v-9L11 4.500M24.500 20v-9L19 4.500" strokeWidth="2.200" />
      </g>
    ),
  },
  {
    name: "Help",
    icon: (
      <g>
        <circle cx="15" cy="15" r="14" fill="#0a97dc" stroke="#fff" strokeWidth="2" />
        <path d="M9.500 11c0-7 11-7 11-1 0 4-5.500 4.500-5.500 9" fill="none" stroke="#fff" strokeWidth="3.500" /><circle cx="15" cy="24" r="2.300" fill="#fff" />
        <circle cx="26" cy="4" r="10" fill="#d83b01" /><path d="M26-2v7M26 7.500v2.500" stroke="#fff" strokeWidth="2.500" />
      </g>
    ),
  },
  { name: "McAfee", icon: <path d="M2 1l13 7 13-7v21l-13 8-13-8zM8 10v9l7 4 7-4v-9l-7 4z" fill="#c1272d" fillRule="evenodd" /> },
  { name: "Excel", active: true },
  {
    name: "Photos",
    open: true,
    icon: (
      <g>
        <rect x="1" y="1" width="28" height="28" rx="1" fill="#2fb0f0" /><path d="M12 29l9-13c1-1 2-1 3 0l5 7v6z" fill="#7d9bf0" />
        <path d="M1 21l8-9c1-1 2.500-1 3.500 0L25 29H1z" fill="#1b4a9c" /><circle cx="20" cy="7.500" r="2.800" fill="#fff" />
      </g>
    ),
  },
];

const Taskbar = () => (
  <footer className="flex h-[60px] shrink-0 items-center bg-[#202020] text-white">
    <div className="flex flex-1 items-center gap-3 pl-7">
      <span className="h-[26px] w-[26px] rounded-full bg-linear-to-br from-[#ffd400] to-[#e85a00]" />
      <span className="text-sm leading-5">
        79°F
        <br />
        <span className="text-[#b0b0b0]">Sunny</span>
      </span>
    </div>
    <div className="mr-[3px] flex gap-[5px]">
      {apps.map((a) => (
        <button
          key={a.name}
          aria-label={a.name}
          className={`relative flex h-[50px] w-[50px] items-center justify-center rounded-md ${a.active ? "border border-[#3a3a3a] bg-[#2d2d2d]" : ""}`}
        >
          {a.icon ? (
            <svg viewBox="0 0 30 30" className="h-[30px] w-[30px] overflow-visible">{a.icon}</svg>
          ) : (
            <ExcelIcon className="h-[30px] w-[30px]" />
          )}
          {a.open && <span className="absolute bottom-px h-1 w-2 rounded-full bg-[#9a9a9a]" />}
          {a.active && <span className="absolute bottom-0 h-1 w-5 rounded-full bg-[#4cc2ff]" />}
        </button>
      ))}
    </div>
    <div className="flex flex-1 items-center justify-end pr-6">
      <svg viewBox="0 0 16 9" className="h-[9px] w-4" fill="none" stroke="#fff" strokeWidth="1.400"><path d="M1 8l7-7 7 7" /></svg>
      <svg viewBox="0 0 20 14" className="ml-[22px] h-[14px] w-5"><path d="M5 14a4.500 4.500 0 0 1-.5-9A6 6 0 0 1 15.500 5 4.500 4.500 0 0 1 15.500 14z" fill="#fff" /><path d="M4.500 5A6 6 0 0 1 15.500 5C12 5 11 8 5 13.500 0 12 0 6 4.500 5z" fill="#c4c4c4" /></svg>
      <svg viewBox="0 0 20 16" className="ml-5 h-4 w-5" fill="none" stroke="#fff" strokeWidth="1.500"><path d="M1 6a12.500 12.500 0 0 1 18 0M4 9.300a8.300 8.300 0 0 1 12 0M7 12.300a4.300 4.300 0 0 1 6 0" /><circle cx="10" cy="14" r="1.500" fill="#fff" stroke="none" /></svg>
      <svg viewBox="0 0 20 18" className="ml-[10px] h-[18px] w-5" fill="none" stroke="#fff" strokeWidth="1.300"><path d="M1 6.500h3.500L9 2v14l-4.500-4.500H1zM11.500 6.500c1.500 1.500 1.500 3.500 0 5M14 4c3 3 3 7 0 10M16.500 2c4 4 4 10 0 14" /></svg>
      <svg viewBox="0 0 20 18" className="ml-[10px] h-[18px] w-5" fill="none" stroke="#fff" strokeWidth="1.400"><rect x="4" y="5" width="13" height="11" rx="2" /><path d="M19 9v3" strokeWidth="2" /><path d="M2 0v3M5.500 0v3M3.800 8v9" /><path d="M0 3h7.500v3a3.700 3.700 0 0 1-7.500 0z" fill="#fff" stroke="none" /><path d="M8 8h6.500v5.500H8z" fill="#fff" stroke="none" /></svg>
      <span className="ml-5 text-right text-sm leading-5">
        11:04 AM
        <br />
        7/18/2022
      </span>
    </div>
  </footer>
);

export default function App() {
  return (
    <div className="flex h-screen flex-col overflow-hidden bg-[#efefef] font-['Open_Sans','Noto_Sans',sans-serif]">
      <TitleBar />
      <Tabs />
      <Ribbon />
      <FormulaBar />
      <Sheet />
      <SheetTabs />
      <StatusBar />
      <Taskbar />
    </div>
  );
}
